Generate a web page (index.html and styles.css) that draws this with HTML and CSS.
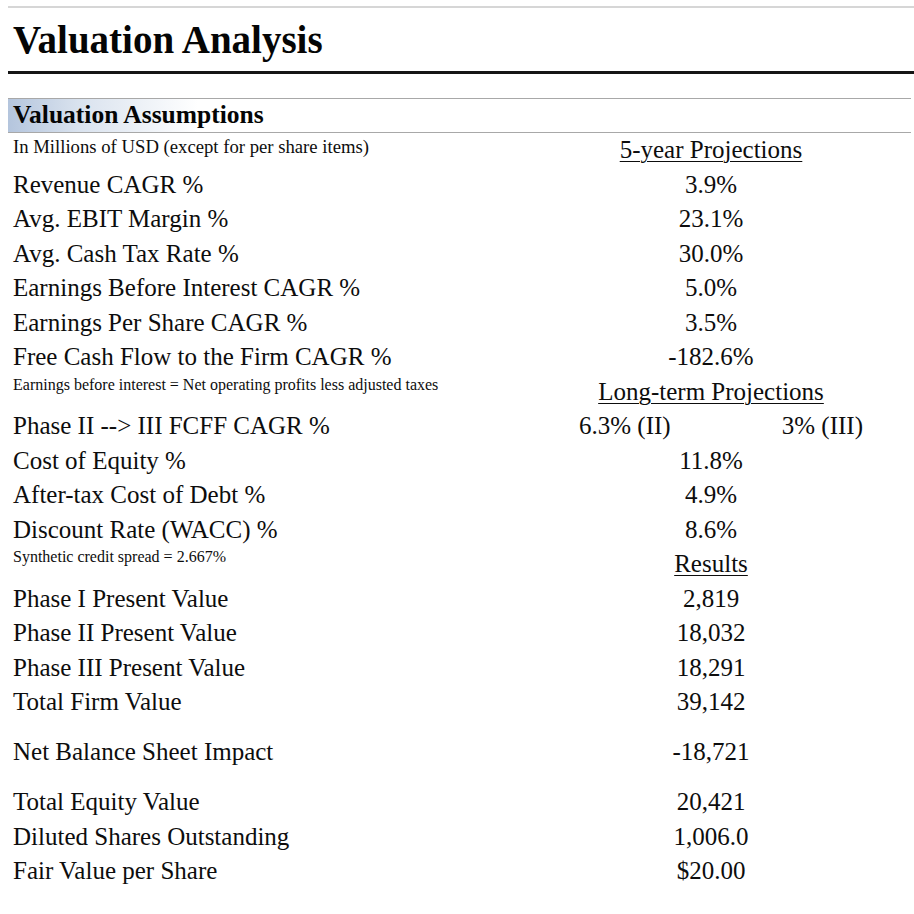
FILE: index.html
```html
<!DOCTYPE html>
<html lang="en">
<head>
<meta charset="utf-8">
<title>Valuation Analysis</title>
<link rel="stylesheet" href="styles.css">
</head>
<body>
<div class="page">
  <div class="top-rule"></div>
  <h1 class="title">Valuation Analysis</h1>
  <div class="thick-rule"></div>
  <h2 class="section">Valuation Assumptions</h2>
  <div class="table">
    <div class="row"><div class="label note note-lg">In Millions of USD (except for per share items)</div><div class="value head">5-year Projections</div></div>
    <div class="row"><div class="label">Revenue CAGR %</div><div class="value">3.9%</div></div>
    <div class="row"><div class="label">Avg. EBIT Margin %</div><div class="value">23.1%</div></div>
    <div class="row"><div class="label">Avg. Cash Tax Rate %</div><div class="value">30.0%</div></div>
    <div class="row"><div class="label">Earnings Before Interest CAGR %</div><div class="value">5.0%</div></div>
    <div class="row"><div class="label">Earnings Per Share CAGR %</div><div class="value">3.5%</div></div>
    <div class="row"><div class="label">Free Cash Flow to the Firm CAGR %</div><div class="value">-182.6%</div></div>
    <div class="row"><div class="label note">Earnings before interest = Net operating profits less adjusted taxes</div><div class="value head">Long-term Projections</div></div>
    <div class="row"><div class="label">Phase II --&gt; III FCFF CAGR %</div><div class="value split"><span>6.3% (II)</span><span>3% (III)</span></div></div>
    <div class="row"><div class="label">Cost of Equity %</div><div class="value">11.8%</div></div>
    <div class="row"><div class="label">After-tax Cost of Debt %</div><div class="value">4.9%</div></div>
    <div class="row"><div class="label">Discount Rate (WACC) %</div><div class="value">8.6%</div></div>
    <div class="row"><div class="label note">Synthetic credit spread = 2.667%</div><div class="value head">Results</div></div>
    <div class="row"><div class="label">Phase I Present Value</div><div class="value">2,819</div></div>
    <div class="row"><div class="label">Phase II Present Value</div><div class="value">18,032</div></div>
    <div class="row"><div class="label">Phase III Present Value</div><div class="value">18,291</div></div>
    <div class="row"><div class="label">Total Firm Value</div><div class="value">39,142</div></div>
    <div class="spacer"></div>
    <div class="row"><div class="label">Net Balance Sheet Impact</div><div class="value">-18,721</div></div>
    <div class="spacer"></div>
    <div class="row"><div class="label">Total Equity Value</div><div class="value">20,421</div></div>
    <div class="row"><div class="label">Diluted Shares Outstanding</div><div class="value">1,006.0</div></div>
    <div class="row"><div class="label">Fair Value per Share</div><div class="value">$20.00</div></div>
  </div>
</div>
</body>
</html>
```

FILE: styles.css
```css
html, body {
  margin: 0;
  padding: 0;
  background: #ffffff;
}

body {
  font-family: "Liberation Serif", "Times New Roman", serif;
  color: #0d0d0d;
}

.page {
  padding-left: 8px;
}

.top-rule {
  height: 2px;
  margin-top: 6px;
  background: #d6d6d6;
}

.title {
  margin: 0;
  height: 63px;
  padding-left: 5px;
  font-size: 39px;
  line-height: 63px;
  font-weight: bold;
  color: #050505;
}

.thick-rule {
  height: 3px;
  background: #151515;
}

.section {
  margin: 24px 3px 0 0;
  border-top: 1px solid #a8a8a8;
  border-bottom: 1px solid #a8a8a8;
  height: 31px;
  padding: 0 0 2px 5px;
  font-size: 25.5px;
  line-height: 31px;
  font-weight: bold;
  color: #050505;
  background: linear-gradient(90deg, #b4c5dd 0px, #d9e2ee 70px, #ffffff 190px);
}

.table {
  padding-left: 5px;
}

.row {
  display: grid;
  grid-template-columns: 545px 306px;
  height: 34.5px;
  font-size: 25px;
  line-height: 34.5px;
}

.spacer {
  height: 15.5px;
}

.label {
  white-space: nowrap;
}

.value {
  text-align: center;
  white-space: nowrap;
}

.note {
  font-size: 16px;
  line-height: 20px;
}

.note-lg {
  font-size: 18.7px;
  line-height: 28px;
}

.head {
  text-decoration: underline;
  text-decoration-thickness: 1px;
  text-underline-offset: 3px;
}

.split {
  display: flex;
  justify-content: space-between;
  padding: 0 1px 0 21px;
}
```
